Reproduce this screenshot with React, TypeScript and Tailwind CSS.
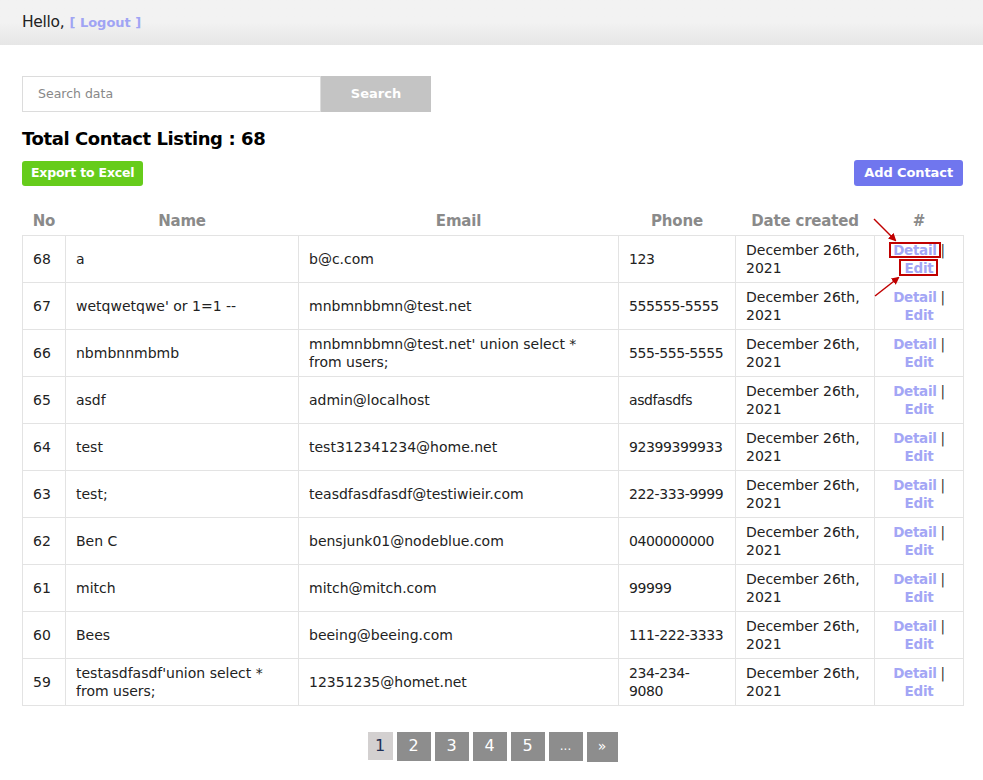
import React from "react";

const rows: { no: number; name: string; email: string; phone: React.ReactNode }[] = [
  { no: 68, name: "a", email: "b@c.com", phone: "123" },
  { no: 67, name: "wetqwetqwe' or 1=1 --", email: "mnbmnbbmn@test.net", phone: "555555-5555" },
  { no: 66, name: "nbmbnnmbmb", email: "mnbmnbbmn@test.net' union select * from users;", phone: "555-555-5555" },
  { no: 65, name: "asdf", email: "admin@localhost", phone: "asdfasdfs" },
  { no: 64, name: "test", email: "test312341234@home.net", phone: "92399399933" },
  { no: 63, name: "test;", email: "teasdfasdfasdf@testiwieir.com", phone: "222-333-9999" },
  { no: 62, name: "Ben C", email: "bensjunk01@nodeblue.com", phone: "0400000000" },
  { no: 61, name: "mitch", email: "mitch@mitch.com", phone: "99999" },
  { no: 60, name: "Bees", email: "beeing@beeing.com", phone: "111-222-3333" },
  {
    no: 59,
    name: "testasdfasdf'union select * from users;",
    email: "12351235@homet.net",
    phone: (
      <>
        234-234-
        <br />
        9080
      </>
    ),
  },
];

const font = { fontFamily: "'DejaVu Sans', 'Open Sans', sans-serif" };

export default function App() {
  return (
    <div className="relative min-h-[780px] bg-white text-[#222]" style={font}>
      <div className="h-[45px] bg-gradient-to-b from-[#f2f2f2] via-[#f2f2f2] to-[#e6e6e6] flex items-center px-[22px]">
        <span className="text-[15.5px] text-[#222] tracking-[-0.3px]">Hello,</span>
        <span className="ml-[5px] text-[13px] font-bold text-[#a0a4f4]">[ Logout ]</span>
      </div>

      <div className="pl-[22px] pr-[20px] pt-[31px]">
        <div className="flex h-[36px] w-[409px]">
          <div className="flex-1 border border-[#dcdcdc] flex items-center px-[15px] text-[12.5px] text-[#888]">
            Search data
          </div>
          <div className="w-[110px] bg-[#c4c4c4] flex items-center justify-center text-white font-bold text-[13px]">
            Search
          </div>
        </div>

        <div className="mt-[15px] text-[18px] font-bold text-black tracking-[-0.4px] leading-[24px]">
          Total Contact Listing : 68
        </div>

        <div className="mt-[10px] flex justify-between items-center">
          <div className="h-[25px] px-[9px] bg-[#66cc1b] rounded-[3px] flex items-center text-white font-bold text-[12.5px] tracking-[-0.2px]">
            Export to Excel
          </div>
          <div className="h-[26px] px-[10px] bg-[#7076ee] rounded-[3px] flex items-center text-white font-bold text-[13px] tracking-[-0.1px] -mt-[2px]">
            Add Contact
          </div>
        </div>

        <table className="mt-[19px] w-[941px] table-fixed border-collapse text-[14px]">
          <colgroup>
            <col className="w-[43px]" />
            <col className="w-[233px]" />
            <col className="w-[320px]" />
            <col className="w-[117px]" />
            <col className="w-[139px]" />
            <col className="w-[89px]" />
          </colgroup>
          <thead>
            <tr className="h-[30px] text-[#8a8a8a] text-[15px] font-bold tracking-[-0.2px]">
              <th className="font-bold align-top pt-[5px]">No</th>
              <th className="font-bold align-top pt-[5px]">Name</th>
              <th className="font-bold align-top pt-[5px]">Email</th>
              <th className="font-bold align-top pt-[5px]">Phone</th>
              <th className="font-bold align-top pt-[5px]">Date created</th>
              <th className="font-bold align-top pt-[5px]">#</th>
            </tr>
          </thead>
          <tbody>
            {rows.map((r) => (
              <tr key={r.no} className="h-[47px] leading-[18px]">
                <td className="border border-[#e3e3e3] px-[10px] align-middle">{r.no}</td>
                <td className="border border-[#e3e3e3] px-[10px] align-middle">{r.name}</td>
                <td className="border border-[#e3e3e3] px-[10px] align-middle">{r.email}</td>
                <td className="border border-[#e3e3e3] px-[10px] align-middle whitespace-nowrap tracking-[-0.4px]">{r.phone}</td>
                <td className="border border-[#e3e3e3] px-[10px] align-middle">December 26th, 2021</td>
                <td className="border border-[#e3e3e3] px-[4px] align-middle text-center text-[13.5px] tracking-[-0.3px]">
                  <span className="font-bold text-[#a3a6f5]">Detail</span>
                  <span className="text-[#333]"> | </span>
                  <br />
                  <span className="font-bold text-[#a3a6f5]">Edit</span>
                </td>
              </tr>
            ))}
          </tbody>
        </table>

        <div className="mt-[26px] flex justify-center items-start gap-[4px] text-[16px]">
          <div className="w-[25px] h-[28px] bg-[#d3d0d0] text-[#1f2f55] flex items-center justify-center">1</div>
          {["2", "3", "4", "5"].map((p) => (
            <div key={p} className="w-[34px] h-[29px] bg-[#8d8d8d] text-white flex items-center justify-center">{p}</div>
          ))}
          <div className="w-[34px] h-[29px] bg-[#8d8d8d] text-white flex items-center justify-center text-[12px]">...</div>
          <div className="w-[31px] h-[30px] bg-[#8d8d8d] text-white flex items-center justify-center text-[14px]">»</div>
        </div>
      </div>

      <div className="absolute left-[889px] top-[242px] w-[52px] h-[16px] border-2 border-[#c00000]" />
      <div className="absolute left-[899px] top-[259px] w-[39px] h-[17px] border-2 border-[#c00000]" />
      <svg className="absolute left-0 top-0 pointer-events-none" width="983" height="780">
        <defs>
          <marker id="ah" markerWidth="8" markerHeight="8" refX="6" refY="4" orient="auto" markerUnits="userSpaceOnUse">
            <path d="M0,0 L8,4 L0,8 z" fill="#c00000" />
          </marker>
        </defs>
        <line x1="874" y1="219" x2="895" y2="240" stroke="#c00000" strokeWidth="1.5" markerEnd="url(#ah)" />
        <line x1="875" y1="296" x2="898" y2="278" stroke="#c00000" strokeWidth="1.5" markerEnd="url(#ah)" />
      </svg>
    </div>
  );
}
